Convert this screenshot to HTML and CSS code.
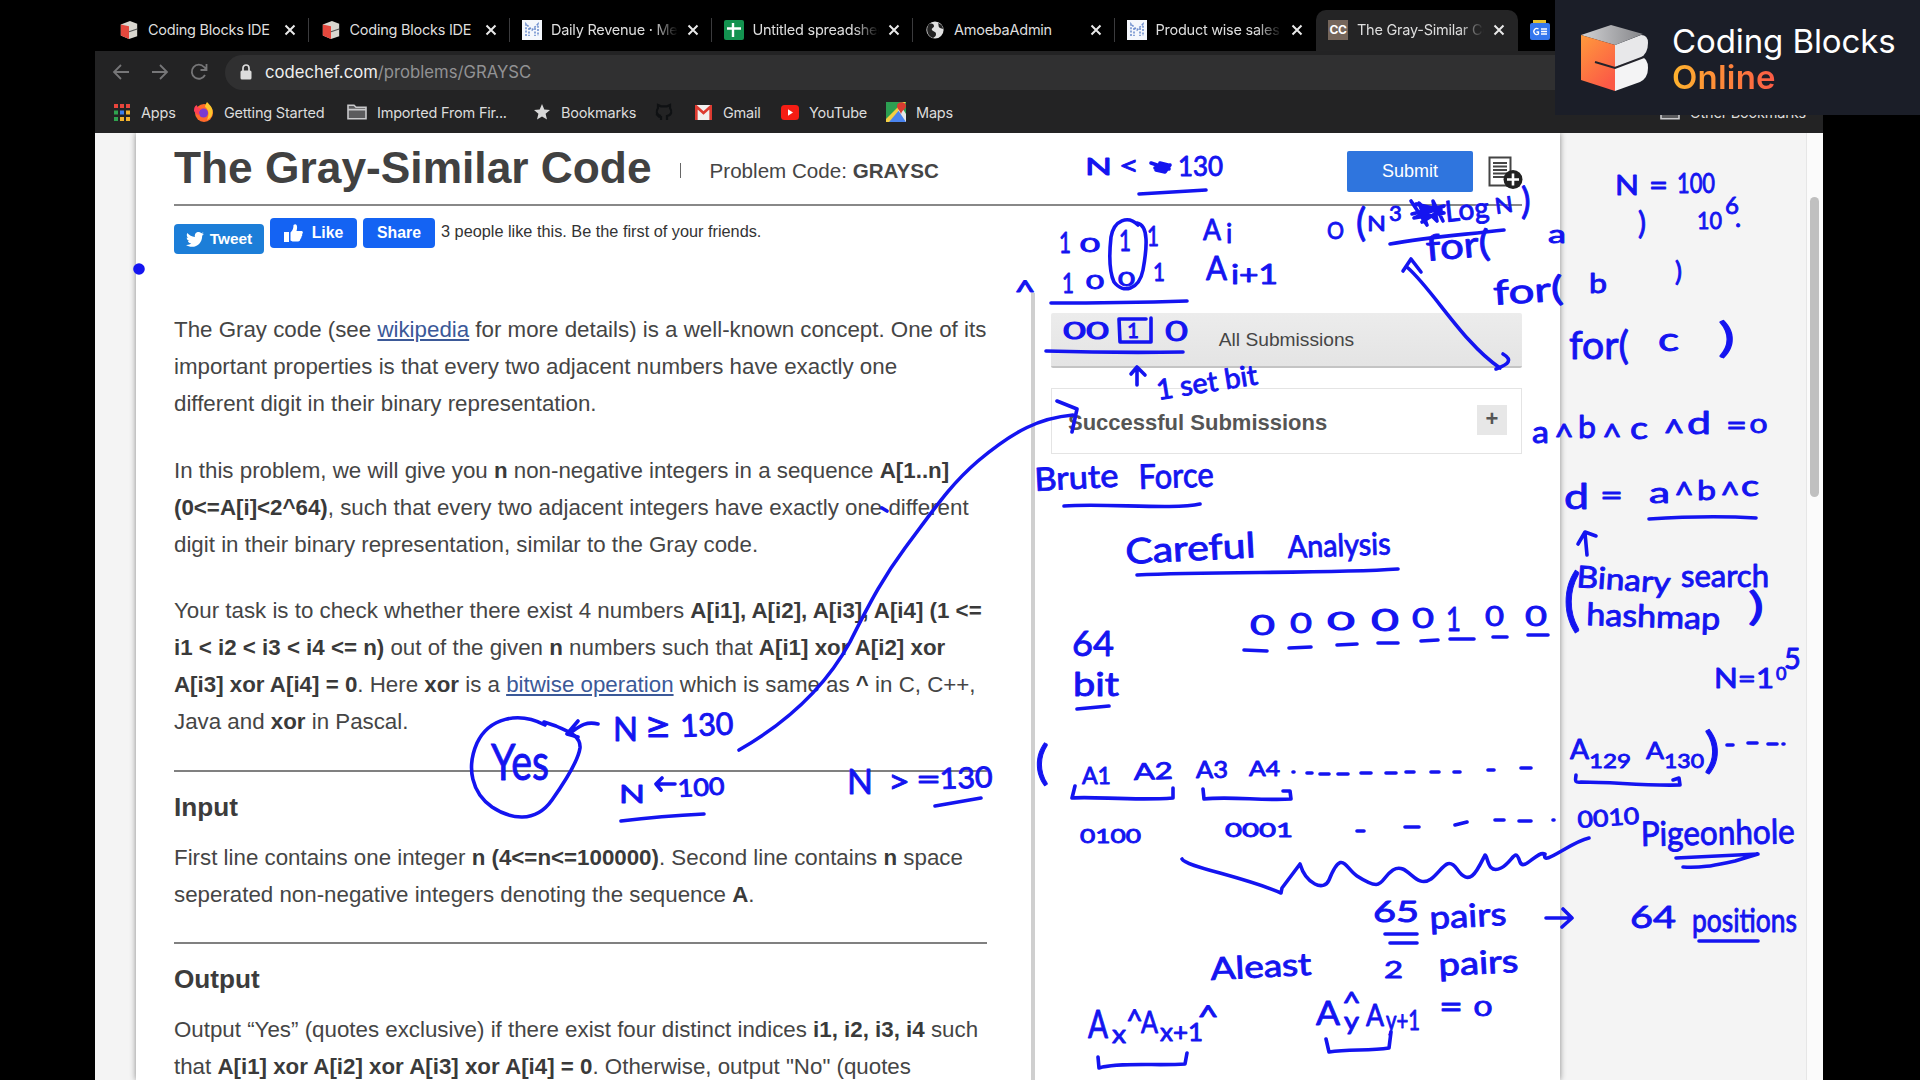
FILE: index.html
```html
<!DOCTYPE html>
<html lang="en">
<head>
<meta charset="utf-8">
<title>The Gray-Similar Code</title>
<link rel="stylesheet" href="styles.css">
</head>
<body>
<svg width="0" height="0" class="defs" aria-hidden="true">
  <defs>
    <symbol id="cube" viewBox="0 0 20 22">
      <path d="M1 5 11 1l8 3v14l-9 3-9-4z" fill="#d9d6cf"/><path d="M1 5l9 2v14l-9-4z" fill="#e5483d"/><path d="M10 13l9-3" stroke="#555" stroke-width="1.2"/>
    </symbol>
    <symbol id="mdoc" viewBox="0 0 20 20">
      <path d="M0 0h20v20H0z" fill="#f4f7fc"/><path d="M4 16V4l6 6 6-6v12M7 8v8M13 8v8" fill="none" stroke="#6f8fce" stroke-width="1.6" stroke-dasharray="2 1.4"/>
    </symbol>
    <symbol id="close" viewBox="0 0 12 12"><path d="M1.5 1.5l9 9M10.5 1.5l-9 9" stroke="#e8e8e8" stroke-width="2" fill="none"/></symbol>
    <symbol id="folder" viewBox="0 0 20 16"><path d="M1 14.8V1.2h6l2 2h10v11.6zM1 5.6h18" fill="#5b5b5d" stroke="#c9c9cb" stroke-width="1.6"/></symbol>
  </defs>
</svg>
<div class="screen">
  <div class="browser">
    <div class="tabs">
      <div class="tab"><svg class="fav"><use href="#cube"/></svg><span class="label">Coding Blocks IDE</span><svg class="x"><use href="#close"/></svg></div>
      <div class="tab"><svg class="fav"><use href="#cube"/></svg><span class="label">Coding Blocks IDE</span><svg class="x"><use href="#close"/></svg></div>
      <div class="tab"><svg class="fav"><use href="#mdoc"/></svg><span class="label fade">Daily Revenue · Metabase</span><svg class="x"><use href="#close"/></svg></div>
      <div class="tab"><svg class="fav" viewBox="0 0 20 20"><rect width="20" height="20" rx="2" fill="#13924f"/><path d="M9 3v14M3 8.5h14" stroke="#fff" stroke-width="2.4"/></svg><span class="label fade">Untitled spreadsheet</span><svg class="x"><use href="#close"/></svg></div>
      <div class="tab"><svg class="fav" viewBox="0 0 20 20"><circle cx="10" cy="10" r="8.6" fill="#e2e2e2"/><path d="M4 4c3-1 5 0 5 2s-3 2-2 4 4 1 4 4-2 3-3 4c-5-1-8-9-4-14zM13 3c1 2 0 4 2 5l3 1c0-3-2-5-5-6z" fill="#222"/></svg><span class="label">AmoebaAdmin</span><svg class="x"><use href="#close"/></svg></div>
      <div class="tab last"><svg class="fav"><use href="#mdoc"/></svg><span class="label fade">Product wise sales</span><svg class="x"><use href="#close"/></svg></div>
      <div class="tab active"><span class="fav cc">CC</span><span class="label fade">The Gray-Similar Code</span><svg class="x"><use href="#close"/></svg></div>
      <div class="tab last"><svg class="fav" viewBox="0 0 20 20"><path d="M3 0h13v6H3z" fill="#e4bf2e"/><rect y="3" width="20" height="17" rx="2" fill="#3577ee"/><path d="M8.500 9a3 3 0 1 0 0 5v-2H6.500M11 9h6M11 11.500h6M11 14h6" stroke="#fff" stroke-width="1.3" fill="none"/></svg></div>
    </div>
    <div class="toolbar">
      <svg class="nav" viewBox="0 0 18 18"><path d="M17 9H2M9 2L2 9l7 7"/></svg>
      <svg class="nav" viewBox="0 0 18 18"><path d="M1 9h15M9 2l7 7-7 7"/></svg>
      <svg class="nav" viewBox="0 0 18 18"><path d="M15 12a7 7 0 1 1-1-8l2 2M16.500 1v6h-6"/></svg>
      <div class="omnibox">
        <svg class="lock" viewBox="0 0 12 16"><rect x=".5" y="6.500" width="11" height="9" rx="1.500" fill="#dcdcdc"/><path d="M3 7V4a3 3 0 0 1 6 0v3" fill="none" stroke="#dcdcdc" stroke-width="1.700"/></svg>
        <span class="url"><b>codechef.com</b>/problems/GRAYSC</span>
      </div>
    </div>
    <div class="bookmarks">
      <span class="bm w-apps"><svg width="16" height="17" viewBox="0 0 16 17"><g fill="#e8453c"><path d="M0 0h4v4H0z"/><path d="M6 0h4v4H6zM12 0h4v4h-4z"/></g><path d="M0 6.500h4v4H0zM0 13h4v4H0z" fill="#2fa34f"/><path d="M6 6.500h4v4H6z" fill="#3b7ded"/><path d="M12 6.500h4v4h-4zM6 13h4v4H6zM12 13h4v4h-4z" fill="#f2b22d"/></svg>Apps</span>
      <span class="bm w-start"><svg width="20" height="20" viewBox="0 0 20 20"><circle cx="10" cy="11" r="9" fill="#ff6a2a"/><path d="M13 0c4 4 7 7 5 13-1 3-3 4-5 5 3-7 1-11-2-13 0-2 1-3 2-5z" fill="#ffc62c"/><circle cx="9.500" cy="11" r="4.500" fill="#7a3bd0"/><path d="M0 9c0-4 1-5 3-6 0 3 3 3 5 4-3 1-4 3-2 6-3 0-5-2-6-4z" fill="#ff3f56"/></svg>Getting Started</span>
      <span class="bm w-imp"><svg width="20" height="16"><use href="#folder"/></svg>Imported From Fir...</span>
      <span class="bm w-book"><svg width="16" height="16" viewBox="0 0 16 16"><path d="M8 0l2.300 5.500 5.700.5-4.400 3.700L13 15.500 8 12.400l-5 3.100 1.400-5.800L0 6l5.700-.5z" fill="#d8d8d8"/></svg>Bookmarks</span>
      <span class="bm w-git"><svg width="18" height="18" viewBox="0 0 18 18"><path d="M6 17v-3c-4 0-2-2-5-3M12 17v-4c5-1 5-5 3-8V2l-3 1.300H6L3 2v3c-2 3-2 7 3 8" fill="none" stroke="#0f1113" stroke-width="2.200"/></svg></span>
      <span class="bm w-gmail"><svg width="17" height="15" viewBox="0 0 17 15"><rect width="17" height="15" rx="1" fill="#f2f0ef"/><path d="M1.300 15V1.500l7.200 6.500 7.200-6.500V15" fill="none" stroke="#dd3b31" stroke-width="2.700"/></svg>Gmail</span>
      <span class="bm w-yt"><svg width="18" height="15" viewBox="0 0 18 15"><rect width="18" height="15" rx="3.500" fill="#f51d14"/><path d="M7 4.200l5 3.300-5 3.300z" fill="#fff"/></svg>YouTube</span>
      <span class="bm w-maps"><svg width="20" height="20" viewBox="0 0 20 20"><path d="M0 0h20v20H0z" fill="#2c9f52"/><path d="M1 20L12 8l8 8v4z" fill="#4a84ee"/><path d="M0 17L17 0h3L3 20H0z" fill="#f5cf43"/><path d="M12 8l3-4 5 8v8z" fill="#e6e6e6"/><path d="M15 12c-1-4-4-5-4-8 0-5 9-5 9 0 0 3-4 4-5 8z" fill="#d93c30"/></svg>Maps</span>
      <span class="bm other"><svg width="20" height="16"><use href="#folder"/></svg>Other Bookmarks</span>
    </div>
    <div class="viewport">
      <main class="sheet">
        <header class="head">
          <h1>The Gray-Similar Code</h1>
          <i class="bar"></i>
          <span class="code">Problem Code: <b>GRAYSC</b></span>
          <button class="submit">Submit</button>
          <svg class="note" width="36" height="34" viewBox="0 0 36 34"><path d="M1.500 1.500h21v28h-21z" fill="#fff" stroke="#444" stroke-width="2"/><path d="M5 7h14M5 10.500h14M5 14h14M5 17.500h14M5 21h11" stroke="#444" stroke-width="1.800"/><circle cx="25" cy="23.500" r="9.500" fill="#222"/><path d="M25 17.500v12M19 23.500h12" stroke="#fff" stroke-width="2.600"/></svg>
        </header>
        <div class="social">
          <span class="pill tweet"><svg width="18" height="15" viewBox="0 0 18 15"><path d="M0 13c2 .2 4-.3 5.300-1.400-1.700 0-3-1-3.400-2.500h1.500C1.700 8.600.7 7.200.7 5.500l1.600.4C.7 4.800.4 2.700 1.300 1c2 2.300 4.500 3.700 7.600 3.900C8.300 2 10.300 0 12.600 0c1 0 2 .4 2.700 1.200l2.200-.9-1.500 2 2-.5-1.800 1.900C16.200 10 12 14.800 6 14.800c-2.300 0-4.300-.7-6-1.800z" fill="#fff"/></svg>Tweet</span>
          <span class="pill like"><svg width="19" height="18" viewBox="0 0 19 18"><path d="M0 8h5v10H0zM6.500 8.500C9 6 9.500 4 9.500 1c3-2 4.500 1 3 6H18c1.500 1 .8 2.500 0 3 .5 1 .3 2-.7 2.700.3 1-.1 1.800-1 2.300 0 1.500-.8 2.500-2.300 2.500H8.500l-2-1z" fill="#fff"/></svg>Like</span>
          <span class="pill share">Share</span>
          <span class="friends">3 people like this. Be the first of your friends.</span>
        </div>
        <div class="columns">
          <article class="problem">
            <p>The Gray code (see <a>wikipedia</a> for more details) is a well-known concept. One of its<br>important properties is that every two adjacent numbers have exactly one<br>different digit in their binary representation.</p>
            <p>In this problem, we will give you <b>n</b> non-negative integers in a sequence <b>A[1..n]</b><br><b>(0&lt;=A[i]&lt;2^64)</b>, such that every two adjacent integers have exactly one different<br>digit in their binary representation, similar to the Gray code.</p>
            <p>Your task is to check whether there exist 4 numbers <b>A[i1], A[i2], A[i3], A[i4] (1 &lt;=</b><br><b>i1 &lt; i2 &lt; i3 &lt; i4 &lt;= n)</b> out of the given <b>n</b> numbers such that <b>A[i1] xor A[i2] xor</b><br><b>A[i3] xor A[i4] = 0</b>. Here <b>xor</b> is a <a>bitwise operation</a> which is same as <b>^</b> in C, C++,<br>Java and <b>xor</b> in Pascal.</p>
            <hr>
            <h3>Input</h3>
            <p>First line contains one integer <b>n (4&lt;=n&lt;=100000)</b>. Second line contains <b>n</b> space<br>seperated non-negative integers denoting the sequence <b>A</b>.</p>
            <hr>
            <h3>Output</h3>
            <p>Output “Yes” (quotes exclusive) if there exist four distinct indices <b>i1, i2, i3, i4</b> such<br>that <b>A[i1] xor A[i2] xor A[i3] xor A[i4] = 0</b>. Otherwise, output "No" (quotes</p>
          </article>
          <aside class="side">
            <div class="all">All Submissions</div>
            <div class="success"><span>Successful Submissions</span><span class="plus">+</span></div>
          </aside>
        </div>
      </main>
      <div class="track"><div class="thumb"></div></div>
    </div>
  </div>

  <div class="brand">
    <svg width="68" height="66" viewBox="0 0 68 66">
      <defs>
        <linearGradient id="lf" x1="0" y1="0" x2=".6" y2="1"><stop offset="0" stop-color="#ff9a3c"/><stop offset="1" stop-color="#fb5a46"/></linearGradient>
        <linearGradient id="tf" x1="0" y1="0" x2="1" y2="0"><stop offset="0" stop-color="#d2d2d4"/><stop offset="1" stop-color="#85868a"/></linearGradient>
      </defs>
      <path d="M34 20L60 10q7 0 7 8 0 11-8 15l-25 9z" fill="#e8e8ea"/>
      <path d="M34 42l26-10q7 1 7 11 0 10-8 14l-25 9z" fill="#f4f4f5"/>
      <path d="M0 10l30-10 32 9-28 11z" fill="url(#tf)"/>
      <path d="M0 10l34 10v46L0 55z" fill="url(#lf)"/>
      <path d="M14 37l20 6 29-11" fill="none" stroke="#23232b" stroke-width="2"/>
    </svg>
    <div class="brand-name"><span>Coding Blocks</span><strong>Online</strong></div>
  </div>

  <svg class="ink" width="1920" height="1080" viewBox="0 0 1920 1080">
    <g class="pen">
      <circle cx="139" cy="269" r="4"/>
      <path d="M882 508l5 3"/>
      <path d="M739 750C800 715 832 675 850 642C872 598 885 575 905 548C935 508 950 485 978 461C1015 430 1040 418 1073 415M1057 401l20 8-5 23"/>
      <path d="M1139 194l67-4M1151 163l18 6-14-1 15-3-5 7-9-2M1160 163l8 2"/>
      <path d="M1138 225c-10-10-24-5-27 12-2 18-2 34 3 45 9 12 25 8 29-12 4-22 6-45-6-47"/>
      <path d="M1051 303q70 0 136-2M1046 351q70 2 137 1M1119 319l1 23h31v-24M1119 319h27"/>
      <path d="M1137 385v-18M1131 374l6-7 8 8"/>
      <path d="M1390 244c38-7 72-9 114-14M1411 201l16 24-8-22 18 18-4-20 10 20M1412 214l32-8-30 12 30-5-28-9 25 6-19 12"/>
      <path d="M1408 268c25 22 55 75 92 100M1403 271l8-12 10 13M1503 354c10 6 6 10-7 15"/>
      <path d="M1649 519q60-4 107-1M1587 555l-2-22M1578 544l7-12 11 4"/>
      <path d="M1064 506c40-3 110 4 136-2M1137 575c75-4 190-1 261-6"/>
      <path d="M1244 650l23 1M1289 648l22-1M1337 645l20-1M1378 643h20M1421 641l17-1M1450 639h24M1493 637h14M1528 635h20M1077 709l32-3"/>
      <path d="M1075 786l-3 12c20-2 60 3 101 0v-10M1203 789l1 10c25-3 60 2 87 0l-1-8h-7"/>
      <path d="M1293 772h1M1307 773h5M1320 774h9M1338 774h10M1361 773h10M1386 773h10M1406 772h8M1431 772h8M1454 772h6M1488 770h6M1521 768h10"/>
      <path d="M1357 831h7M1405 827h14M1455 825l12-3M1495 820h9M1519 821h12M1553 820h1"/>
      <path d="M1182 859c4 8 60 17 99 34l1-5 18-24c6 20 24 28 29 16 13-32 16-12 28-4 28 18 22 3 36-6 15-9 22 20 38 9 11-8 16-24 26-10 13 19 20 2 28-14 3 0 2 20 16 13 12-6 14-22 19-6 4 10 17-12 25-8-4 14 25-12 44-16"/>
      <path d="M1385 934h32M1390 943h27M1546 918h25M1563 909l9 9-10 9M1699 941h59"/>
      <path d="M1098 1057l1 11c20-6 60-2 86-4l2-11M1326 1039l3 13c20-3 40-1 60-4l2-16"/>
      <path d="M1576 775c0 4-3 8 5 7 34 0 60 4 99 3l-1-7-6 2"/>
      <path d="M1727 745h6M1748 743h9M1768 744h9M1783 744h1"/>
      <path d="M1676 858l82-4-23 7c-20 4-30 7-52 6"/>
      <path d="M545 725c-27-14-56-7-68 18-11 25-5 50 15 64 18 12 43 17 60-7 12-17 26-38 28-52 1-13-14-17-24-22l-12-4"/>
      <path d="M598 724c-12-3-18 2-28 9M578 721l-11 13 11 3M621 821q40-5 83-7M935 806l46-8M656 784h19M662 778l-6 6 5 6"/>
    </g>
    <g class="hand">
      <text x="1085" y="175" font-size="23" textLength="27">N</text><text x="1119" y="175" font-size="26" textLength="20">&lt;</text><text x="1178" y="176" font-size="26" textLength="45">130</text>
      <text x="1059" y="253" font-size="29" textLength="12">1</text><text x="1080" y="252" font-size="20" textLength="20">0</text><text x="1119" y="251" font-size="29" textLength="12">1</text><text x="1147" y="246" font-size="27" textLength="12">1</text>
      <text x="1203" y="240" font-size="29" textLength="18">A</text><text x="1226" y="243" font-size="26">i</text>
      <text x="1014" y="303" font-size="30" textLength="22">^</text><text x="1062" y="293" font-size="27" textLength="12">1</text><text x="1086" y="289" font-size="19" textLength="18">0</text><text x="1118" y="286" font-size="20" textLength="17">0</text><text x="1153" y="281" font-size="25" textLength="12">1</text>
      <text x="1206" y="280" font-size="32" textLength="21">A</text><text x="1231" y="284" font-size="26" textLength="47">i+1</text>
      <text x="1063" y="339" font-size="24" textLength="46">00</text><text x="1127" y="338" font-size="22" textLength="12">1</text><text x="1165" y="341" font-size="27" textLength="23">0</text>
      <text x="1158" y="400" font-size="28" textLength="102" transform="rotate(-9 1158 400)">1 set bit</text>
      <text x="1327" y="239" font-size="23" textLength="17">O</text><text x="1356" y="236" font-size="38">(</text><text x="1367" y="231" font-size="22" textLength="19">N</text><text x="1389" y="221" font-size="22">3</text>
      <text x="1446" y="222" font-size="29" textLength="44" transform="rotate(-6 1446 222)">Log</text><text x="1496" y="214" font-size="22" textLength="18" transform="rotate(-8 1496 214)">N</text><text x="1521" y="214" font-size="36">)</text>
      <text x="1427" y="261" font-size="36" textLength="64" transform="rotate(-5 1427 261)">for(</text>
      <text x="1548" y="243" font-size="25" textLength="18">a</text>
      <text x="1615" y="195" font-size="27" textLength="24">N</text><text x="1649" y="195" font-size="28" textLength="19">=</text><text x="1677" y="193" font-size="26" textLength="38">100</text>
      <text x="1638" y="234" font-size="30">)</text><text x="1697" y="229" font-size="24" textLength="25">10</text><text x="1725" y="214" font-size="24">6</text><text x="1735" y="227" font-size="26">.</text>
      <text x="1494" y="305" font-size="34" textLength="70" transform="rotate(-4 1494 305)">for(</text><text x="1589" y="293" font-size="26" textLength="18">b</text><text x="1675" y="281" font-size="26">)</text>
      <text x="1569" y="359" font-size="38" textLength="60">for(</text><text x="1658" y="351" font-size="32" textLength="21">c</text><text x="1718" y="352" font-size="41" textLength="17">)</text>
      <text x="1532" y="443" font-size="30" textLength="17">a</text><text x="1554" y="449" font-size="34" textLength="20">^</text><text x="1578" y="438" font-size="30" textLength="18">b</text><text x="1602" y="449" font-size="34" textLength="20">^</text><text x="1630" y="439" font-size="30" textLength="18">c</text><text x="1663" y="446" font-size="36" textLength="22">^</text><text x="1687" y="434" font-size="31" textLength="24">d</text><text x="1726" y="436" font-size="30" textLength="21">=</text><text x="1750" y="433" font-size="20" textLength="17">0</text>
      <text x="1564" y="509" font-size="34" textLength="25">d</text><text x="1600" y="506" font-size="30" textLength="23">=</text><text x="1649" y="503" font-size="29" textLength="21">a</text><text x="1674" y="507" font-size="34" textLength="20">^</text><text x="1697" y="500" font-size="27" textLength="19">b</text><text x="1720" y="507" font-size="34" textLength="20">^</text><text x="1741" y="496" font-size="28" textLength="18">c</text>
      <text x="1563" y="623" font-size="68" textLength="18">(</text><text x="1576" y="587" font-size="30" textLength="94" transform="rotate(4 1576 587)">Binary</text><text x="1681" y="587" font-size="30" textLength="88">search</text>
      <text x="1586" y="625" font-size="31" textLength="134" transform="rotate(2 1586 625)">hashmap</text><text x="1748" y="620" font-size="38" textLength="16">)</text>
      <text x="1714" y="688" font-size="27" textLength="60">N=1</text><text x="1776" y="680" font-size="18">0</text><text x="1784" y="669" font-size="29">5</text>
      <text x="1035" y="491" font-size="32" textLength="84" transform="rotate(-3 1035 491)">Brute</text><text x="1139" y="489" font-size="34" textLength="75" transform="rotate(-2 1139 489)">Force</text>
      <text x="1126" y="564" font-size="35" textLength="130" transform="rotate(-3 1126 564)">Careful</text><text x="1288" y="558" font-size="31" textLength="103" transform="rotate(-2 1288 558)">Analysis</text>
      <text x="1250" y="635" font-size="27" textLength="25">0</text><text x="1290" y="633" font-size="27" textLength="22">0</text><text x="1327" y="630" font-size="25" textLength="28">0</text><text x="1371" y="631" font-size="30" textLength="28">0</text><text x="1412" y="628" font-size="27" textLength="22">0</text><text x="1446" y="631" font-size="33" textLength="15">1</text><text x="1485" y="626" font-size="26" textLength="19">0</text><text x="1525" y="626" font-size="27" textLength="22">0</text>
      <text x="1072" y="656" font-size="35" textLength="42">64</text><text x="1073" y="696" font-size="32" textLength="46">bit</text>
      <text x="1035" y="779" font-size="46" textLength="14">(</text><text x="1082" y="784" font-size="24" textLength="29">A1</text><text x="1134" y="780" font-size="23" textLength="39" transform="rotate(-2 1134 780)">A2</text><text x="1196" y="778" font-size="23" textLength="32">A3</text><text x="1249" y="776" font-size="21" textLength="31">A4</text>
      <text x="1080" y="843" font-size="20" textLength="61">0100</text><text x="1225" y="837" font-size="20" textLength="68">0001</text>
      <text x="1373" y="922" font-size="29" textLength="46">65</text><text x="1430" y="929" font-size="32" textLength="77" transform="rotate(-3 1430 929)">pairs</text>
      <text x="1630" y="928" font-size="31" textLength="46">64</text><text x="1692" y="932" font-size="32" textLength="105">positions</text>
      <text x="1211" y="980" font-size="31" textLength="101" transform="rotate(-3 1211 980)">Aleast</text><text x="1384" y="978" font-size="24" textLength="19">2</text><text x="1439" y="976" font-size="32" textLength="80" transform="rotate(-3 1439 976)">pairs</text>
      <text x="1088" y="1038" font-size="38" textLength="20">A</text><text x="1112" y="1043" font-size="25" textLength="14">x</text><text x="1126" y="1032" font-size="30" textLength="17">^</text><text x="1141" y="1033" font-size="31" textLength="17">A</text><text x="1160" y="1041" font-size="25" textLength="43">x+1</text><text x="1197" y="1028" font-size="30" textLength="22">^</text>
      <text x="1316" y="1025" font-size="32" textLength="24">A</text><text x="1342" y="1013" font-size="28" textLength="19">^</text><text x="1344" y="1030" font-size="25" textLength="15">y</text><text x="1366" y="1026" font-size="31" textLength="18">A</text><text x="1386" y="1030" font-size="26" textLength="34">y+1</text><text x="1439" y="1018" font-size="33" textLength="24">=</text><text x="1474" y="1016" font-size="22" textLength="18">0</text>
      <text x="1570" y="759" font-size="26" textLength="19">A</text><text x="1589" y="768" font-size="20" textLength="42">129</text><text x="1646" y="759" font-size="24" textLength="18">A</text><text x="1664" y="768" font-size="20" textLength="40">130</text><text x="1704" y="767" font-size="48" textLength="16">)</text>
      <text x="1578" y="828" font-size="23" textLength="62" transform="rotate(-4 1578 828)">0010</text><text x="1641" y="846" font-size="34" textLength="154" transform="rotate(-1 1641 846)">Pigeonhole</text>
      <text x="491" y="780" font-size="50" textLength="58">Yes</text>
      <text x="613" y="741" font-size="33" textLength="25">N</text><text x="644" y="738" font-size="36" textLength="28">≥</text><text x="681" y="737" font-size="31" textLength="53" transform="rotate(-3 681 737)">130</text>
      <text x="619" y="803" font-size="25" textLength="26">N</text><text x="678" y="797" font-size="24" textLength="47" transform="rotate(-3 678 797)">100</text>
      <text x="847" y="794" font-size="35" textLength="26">N</text><text x="888" y="793" font-size="32" textLength="22">&gt;</text><text x="916" y="790" font-size="30" textLength="25">=</text><text x="940" y="789" font-size="29" textLength="53" transform="rotate(-2 940 789)">130</text>
    </g>
  </svg>
</div>
<script src="ink.js"></script>
</body>
</html>
```
FILE: ink.js
```js
// Stretch the pen notes' glyphs, not only their spacing, to each given length.
document.querySelectorAll('.hand text[textLength]').forEach(function (t) {
  t.setAttribute('lengthAdjust', 'spacingAndGlyphs');
});
```
FILE: styles.css
```css
* { box-sizing: border-box; }
body { margin: 0; background: #000; }
.defs { position: absolute; }
.screen { position: relative; width: 1920px; height: 1080px; overflow: hidden; background: #000; }
.browser { width: 1728px; height: 1080px; margin-left: 95px; display: flex; flex-direction: column; font-family: Inter, sans-serif; }

/* Tab strip */
.tabs { height: 51px; padding: 10px 0 0 12px; display: flex; overflow: hidden; flex: none; }
.tab { position: relative; flex: 0 0 201.5px; min-width: 0; height: 41px; padding: 0 13px 2px 12px; display: flex; align-items: center; color: #dedede; font-size: 14.5px; letter-spacing: -.25px; }
.tab::after { content: ""; position: absolute; right: 0; top: 8px; width: 1px; height: 24px; background: #3b3b3d; }
.tab.last::after, .tab.active::after { display: none; }
.tab.active { background: #242425; border-radius: 10px 10px 0 0; }
.fav { width: 20px; height: 20px; flex: none; margin-right: 9px; }
.fav.cc { background: #75665b; color: #fff; font-size: 12px; font-weight: 700; line-height: 20px; text-align: center; letter-spacing: -.5px; }
.label { flex: 1 1 0; min-width: 0; overflow: hidden; white-space: nowrap; }
.label.fade { -webkit-mask-image: linear-gradient(90deg, #000 80%, transparent); mask-image: linear-gradient(90deg, #000 80%, transparent); }
.x { width: 12px; height: 12px; flex: none; margin-left: 9px; }

/* Toolbar */
.toolbar { height: 42px; flex: none; background: #232324; display: flex; align-items: center; padding-left: 17px; }
.nav { width: 18px; height: 18px; margin-right: 21px; fill: none; stroke: #767678; stroke-width: 1.8; }
.omnibox { flex: 1; height: 35px; margin-left: -4px; border-radius: 18px 0 0 18px; background: #303031; display: flex; align-items: center; padding-left: 15px; }
.lock { width: 12px; height: 16px; margin-right: 13px; }
.url { font-size: 16.7px; color: #929294; }
.url b { font-weight: 400; color: #efefef; }

/* Bookmarks */
.bookmarks { height: 40px; flex: none; background: #232324; display: flex; align-items: center; padding: 0 17px 2px 19px; color: #dcdcdc; font-size: 14.5px; white-space: nowrap; letter-spacing: -.2px; }
.bm { display: flex; align-items: center; gap: 10px; flex: none; }
.w-apps { width: 80px; gap: 11px; }
.w-start { width: 153px; }
.w-imp { width: 187px; }
.w-book { width: 121px; gap: 11px; }
.w-git { width: 40px; }
.w-gmail { width: 86px; gap: 11px; }
.w-yt { width: 105px; }
.other { margin-left: auto; }

/* Page */
.viewport { flex: 1; min-height: 0; background: #f4f4f4; display: flex; justify-content: space-between; overflow: hidden; }
.sheet { width: 1424px; margin-left: 41px; background: #fff; box-shadow: 0 0 6px rgba(0, 0, 0, .45); padding: 0 38px; font-family: "Liberation Sans", Arial, sans-serif; color: #454545; }
.track { width: 17px; background: #fbfbfb; border-left: 1px solid #e6e6e6; padding: 64px 0 0 3px; }
.thumb { width: 9px; height: 300px; border-radius: 5px; background: #c0c0c0; }

.head { height: 73px; border-bottom: 2px solid #888; display: flex; align-items: center; }
h1 { margin: 0 28px 1px 0; font-size: 44.3px; line-height: 50px; color: #414141; white-space: nowrap; }
.bar { width: 1px; height: 15px; background: #666; margin: 4px 29px 0 0; }
.code { font-size: 20.6px; white-space: nowrap; padding-top: 4px; }
.submit { margin: 6px 15px 0 auto; width: 126px; height: 41px; border: 0; border-radius: 2px; background: #2f75de; color: #fff; font: 18px "Liberation Sans", Arial, sans-serif; }
.note { margin: 8px -2px 0 0; }

.social { height: 105px; padding-top: 12px; display: flex; align-items: flex-start; }
.pill { height: 30px; border-radius: 4px; background: #1463f3; color: #fff; font-size: 15.8px; font-weight: 700; display: flex; align-items: center; justify-content: center; }
.tweet { width: 90px; margin: 6px 6px 0 0; background: #1c7ed8; gap: 6px; font-size: 15.4px; }
.like { width: 87px; margin-right: 6px; gap: 9px; }
.share { width: 72px; margin-right: 6px; }
.friends { font-size: 16.3px; line-height: 27px; color: #333; }

.columns { display: flex; }
.problem { width: 812px; font-size: 22.32px; line-height: 37px; white-space: nowrap; }
.problem p { margin: 0 0 29.5px; }
.problem b { color: #3a3a3a; }
.problem a { color: #3b5998; text-decoration: underline; }
.problem hr { width: 813px; height: 2px; margin: 0 0 17px; border: 0; background: #808080; }
h3 { margin: 0 0 14px; font-size: 26.2px; line-height: 36px; color: #3c3c3c; }
.side { margin: -18px 0 0 45px; width: 491px; height: 800px; padding: 20px 0 0 16px; border-left: 4px solid #cfcfcf; }
.all { height: 55px; background: linear-gradient(#ececec, #e4e4e4); border-bottom: 2px solid #c4c4c4; border-radius: 2px; text-align: center; font-size: 19.2px; line-height: 53px; }
.success { margin-top: 20px; height: 66px; border: 1px solid #e4e4e4; padding: 0 14px 0 16px; display: flex; align-items: center; justify-content: space-between; font-size: 22px; font-weight: 700; color: #555; }
.success > span:first-child { padding-top: 4px; }
.plus { width: 30px; height: 30px; background: #e7e7e7; line-height: 28px; text-align: center; margin-top: -2px; }

/* Channel badge pinned over the window corner */
.brand { position: absolute; right: 0; top: 0; width: 365px; height: 115px; background: #1b1e28; display: flex; padding: 25px 0 0 26px; gap: 23px; font-family: Inter, sans-serif; color: #fff; }
.brand-name { display: flex; flex-direction: column; align-items: flex-start; font-size: 33px; line-height: 36px; white-space: nowrap; margin-top: -2px; }
.brand-name span { font-weight: 400; letter-spacing: -.1px; }
.brand-name strong { font-weight: 600; background: linear-gradient(90deg, #ffb42e, #fb5a46); -webkit-background-clip: text; background-clip: text; color: transparent; letter-spacing: .2px; }

/* Pen annotations over the page */
.ink { position: absolute; left: 0; top: 0; }
.pen { fill: none; stroke: #1414f0; stroke-width: 3.6; stroke-linecap: round; stroke-linejoin: round; }
.pen circle { fill: #1414f0; }
.hand { font-family: Lato, sans-serif; fill: #1414f0; stroke: #1414f0; stroke-width: .9; stroke-linejoin: round; }
```
